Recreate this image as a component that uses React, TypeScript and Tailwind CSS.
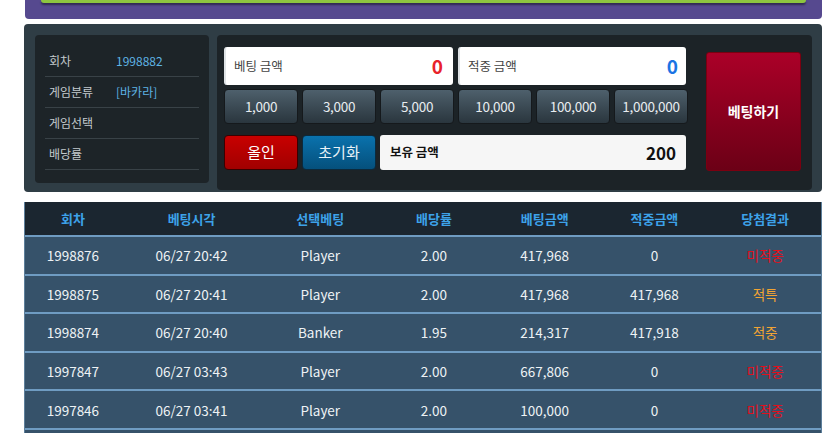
import React from 'react';

const chips = ['1,000', '3,000', '5,000', '10,000', '100,000', '1,000,000'];

const info = [
  { label: '회차', value: '1998882' },
  { label: '게임분류', value: '[바카라]' },
  { label: '게임선택', value: '' },
  { label: '배당률', value: '' },
];

const cols = [
  { title: '회차', w: 'w-[96px]' },
  { title: '베팅시각', w: 'w-[142px]' },
  { title: '선택베팅', w: 'w-[116px]' },
  { title: '배당률', w: 'w-[112px]' },
  { title: '베팅금액', w: 'w-[110px]' },
  { title: '적중금액', w: 'w-[110px]' },
  { title: '당첨결과', w: 'w-[112px]' },
];

const rows = [
  ['1998876', '06/27 20:42', 'Player', '2.00', '417,968', '0', '미적중'],
  ['1998875', '06/27 20:41', 'Player', '2.00', '417,968', '417,968', '적특'],
  ['1998874', '06/27 20:40', 'Banker', '1.95', '214,317', '417,918', '적중'],
  ['1997847', '06/27 03:43', 'Player', '2.00', '667,806', '0', '미적중'],
  ['1997846', '06/27 03:41', 'Player', '2.00', '100,000', '0', '미적중'],
];

export default function App() {
  return (
    <div className="h-[433px] overflow-hidden bg-white font-['Noto_Sans_CJK_KR','Noto_Sans',sans-serif]">
      {/* 상단 배너 */}
      <div className="mx-[25px] w-[797px] h-[19px] bg-[#56498f] rounded-b-[4px] px-[16px]">
        <div className="h-[3px] bg-[#8dc63f] rounded-b-[3px] shadow-[0_2px_2px_rgba(0,0,0,0.45)]" />
      </div>

      {/* 베팅 패널 */}
      <div className="mt-[5px] ml-[24px] w-[798px] h-[168px] bg-[#2f3d45] rounded-[4px] flex pt-[11px] pl-[11px] pr-[10px] gap-[8px]">
        <div className="w-[174px] h-[148px] bg-[#1d2428] rounded-[4px] px-[10px] pt-[11px]">
          {info.map(({ label, value }) => (
            <div key={label} className="h-[31px] border-b border-[#394247] flex items-center pl-[4px] text-[12px]">
              <span className="w-[67px] text-[#c3cacd]">{label}</span>
              <span className="text-[#5eb3e4]">{value}</span>
            </div>
          ))}
        </div>

        <div className="w-[595px] h-[155px] bg-[#1c2327] rounded-[4px] flex pt-[12px] pl-[7px]">
          <div className="w-[464px] flex flex-col">
            <div className="flex gap-[5px] h-[38px]">
              <div className="w-[229px] bg-white rounded-[3px] border-l-2 border-[#dfe3e6] flex items-center justify-between pl-[8px] pr-[10px]">
                <span className="text-[12.5px] text-[#444]">베팅 금액</span>
                <span className="text-[19px] font-bold text-[#e8222a]">0</span>
              </div>
              <div className="w-[228px] bg-white rounded-[3px] border-l-2 border-[#dfe3e6] flex items-center justify-between pl-[8px] pr-[8px]">
                <span className="text-[12.5px] text-[#444]">적중 금액</span>
                <span className="text-[19px] font-bold text-[#1b74e4]">0</span>
              </div>
            </div>
            <div className="flex gap-[4px] mt-[4px] h-[35px]">
              {chips.map((c) => (
                <button
                  key={c}
                  className="w-[74px] rounded-[4px] border border-[#15191c] bg-gradient-to-b from-[#4e606c] to-[#2a363e] text-[#e8ecef] text-[13.5px] tracking-[-0.3px]"
                >
                  {c}
                </button>
              ))}
            </div>
            <div className="flex gap-[4px] mt-[11px] h-[35px]">
              <button className="w-[74px] rounded-[4px] border border-[#3a0000] bg-gradient-to-b from-[#c80000] to-[#a10000] text-white text-[15px]">
                올인
              </button>
              <button className="w-[74px] rounded-[4px] border border-[#0b2a3d] bg-gradient-to-b from-[#0a72ad] to-[#05507c] text-[#e8f2f8] text-[15px]">
                초기화
              </button>
              <div className="w-[306px] bg-[#f6f6f6] rounded-[3px] flex items-center justify-between pl-[10px] pr-[10px]">
                <span className="text-[12.5px] font-bold text-[#111]">보유 금액</span>
                <span className="text-[17px] font-bold text-[#111]">200</span>
              </div>
            </div>
          </div>
          <div className="ml-[18px] pt-[5px]">
            <button className="w-[95px] h-[119px] rounded-[3px] border border-[#7a0010] bg-gradient-to-b from-[#ab0028] to-[#6c0016] text-white text-[14px] font-bold">
              베팅하기
            </button>
          </div>
        </div>
      </div>

      {/* 베팅 내역 */}
      <div className="mt-[10px] ml-[24px] w-[798px] border-x border-[#5d7f9b]">
        <div className="flex h-[35px] bg-[#1b2630] border-b-2 border-[#6f9cc2]">
          {cols.map((c) => (
            <div key={c.title} className={`${c.w} flex items-center justify-center text-[13px] font-bold text-[#3da2e9]`}>
              {c.title}
            </div>
          ))}
        </div>
        {rows.map((r) => (
          <div key={r[0]} className="flex h-[38.6px] bg-[#36526a] border-b-2 border-[#6f9cc2]">
            {r.map((cell, i) => {
              let color = 'text-[#eef2f5]';
              if (i === 6) color = cell === '미적중' ? 'text-[#e3101c]' : 'text-[#f2a433]';
              return (
                <div key={i} className={`${cols[i].w} flex items-center justify-center text-[13.5px] ${color}`}>
                  {cell}
                </div>
              );
            })}
          </div>
        ))}
        <div className="h-[20px] bg-[#36526a]" />
      </div>
    </div>
  );
}
